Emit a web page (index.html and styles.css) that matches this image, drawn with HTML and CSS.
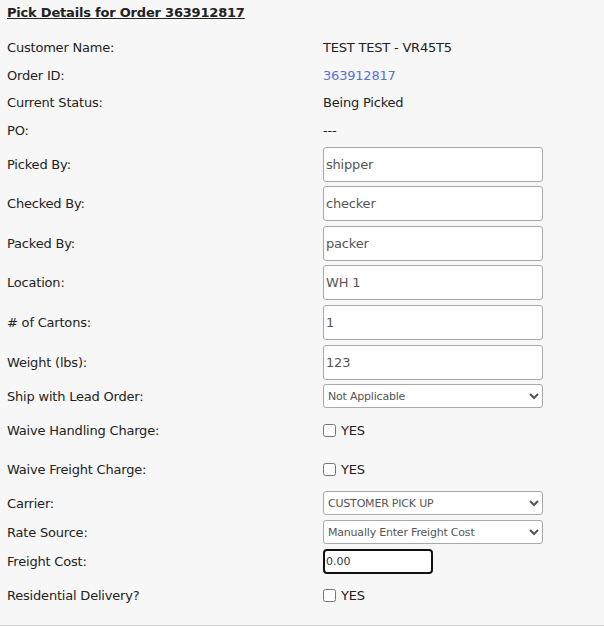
FILE: index.html
```html
<!DOCTYPE html>
<html lang="en">
<head>
    <meta charset="UTF-8" />
    <title>Pick Details</title>
    <link rel="stylesheet" href="styles.css">
</head>
<body>
    <div class="pick-panel">
        <h3 class="titulo">Pick Details for Order 363912817</h3>

        <table class="detalles">
            <tr class="fila-texto">
                <td class="etiqueta">Customer Name:</td>
                <td>TEST TEST - VR45T5</td>
            </tr>
            <tr class="fila-texto">
                <td class="etiqueta">Order ID:</td>
                <td><a class="enlace" href="#">363912817</a></td>
            </tr>
            <tr class="fila-texto">
                <td class="etiqueta">Current Status:</td>
                <td>Being Picked</td>
            </tr>
            <tr class="fila-texto">
                <td class="etiqueta">PO:</td>
                <td>---</td>
            </tr>
            <tr class="fila-input">
                <td class="etiqueta">Picked By:</td>
                <td><input class="campo" type="text" value="shipper"></td>
            </tr>
            <tr class="fila-input">
                <td class="etiqueta">Checked By:</td>
                <td><input class="campo" type="text" value="checker"></td>
            </tr>
            <tr class="fila-input">
                <td class="etiqueta">Packed By:</td>
                <td><input class="campo" type="text" value="packer"></td>
            </tr>
            <tr class="fila-input">
                <td class="etiqueta">Location:</td>
                <td><input class="campo" type="text" value="WH 1"></td>
            </tr>
            <tr class="fila-input">
                <td class="etiqueta"># of Cartons:</td>
                <td><input class="campo" type="text" value="1"></td>
            </tr>
            <tr class="fila-input">
                <td class="etiqueta">Weight (lbs):</td>
                <td><input class="campo" type="text" value="123"></td>
            </tr>
            <tr class="fila-select">
                <td class="etiqueta">Ship with Lead Order:</td>
                <td>
                    <select class="lista">
                        <option>Not Applicable</option>
                    </select>
                </td>
            </tr>
            <tr class="fila-check">
                <td class="etiqueta">Waive Handling Charge:</td>
                <td><label class="opcion"><input type="checkbox"> YES</label></td>
            </tr>
            <tr class="fila-check">
                <td class="etiqueta">Waive Freight Charge:</td>
                <td><label class="opcion"><input type="checkbox"> YES</label></td>
            </tr>
            <tr class="fila-select">
                <td class="etiqueta">Carrier:</td>
                <td>
                    <select class="lista">
                        <option>CUSTOMER PICK UP</option>
                    </select>
                </td>
            </tr>
            <tr class="fila-select">
                <td class="etiqueta">Rate Source:</td>
                <td>
                    <select class="lista">
                        <option>Manually Enter Freight Cost</option>
                    </select>
                </td>
            </tr>
            <tr class="fila-select">
                <td class="etiqueta">Freight Cost:</td>
                <td><input class="campo-costo" type="text" value="0.00"></td>
            </tr>
            <tr class="fila-check">
                <td class="etiqueta">Residential Delivery?</td>
                <td><label class="opcion"><input type="checkbox"> YES</label></td>
            </tr>
        </table>
    </div>
</body>
</html>
```

FILE: styles.css
```css
body {
    font-family: 'DejaVu Sans', Verdana, sans-serif;
    font-size: 13px;
    letter-spacing: -0.2px;
    background-color: #f7f7f7;
    color: #222;
    margin: 0;
    padding: 0;
}
.pick-panel {
    padding: 4px 7px 10px 7px;
    border-bottom: 1px solid #d0d0d0;
    height: 611px;
}
.titulo {
    margin: 0;
    font-size: 13px;
    font-weight: bold;
    text-decoration: underline;
    line-height: 18px;
}
.detalles {
    border-collapse: collapse;
    margin-top: 12px;
}
.detalles td {
    padding: 0;
    vertical-align: middle;
}
.etiqueta {
    width: 316px;
}
.fila-texto {
    height: 27.6px;
}
.fila-input {
    height: 39.6px;
}
.fila-select {
    height: 29px;
}
.fila-check {
    height: 39px;
}
.enlace {
    color: #5b6fd9;
    text-decoration: none;
}
.campo {
    box-sizing: border-box;
    width: 220px;
    height: 35px;
    border: 1px solid #a9a9a9;
    border-radius: 3px;
    padding: 0 2px;
    font-family: 'DejaVu Sans', Verdana, sans-serif;
    font-size: 13px;
    letter-spacing: -0.2px;
    color: #555;
    background-color: #fff;
    display: block;
}
.lista {
    box-sizing: border-box;
    width: 220px;
    height: 24px;
    border: 1px solid #a9a9a9;
    border-radius: 3px;
    font-family: 'DejaVu Sans', Verdana, sans-serif;
    font-size: 11px;
    letter-spacing: -0.2px;
    color: #555;
    background-color: #fff;
    display: block;
}
.campo-costo {
    box-sizing: border-box;
    width: 110px;
    height: 25px;
    border: 2px solid #111;
    border-radius: 4px;
    padding: 0 1px;
    font-family: 'DejaVu Sans', Verdana, sans-serif;
    font-size: 11px;
    color: #333;
    background-color: #fff;
    display: block;
    outline: none;
}
.opcion {
    display: flex;
    align-items: center;
    gap: 5px;
}
.opcion input {
    margin: 0;
    width: 13px;
    height: 13px;
}
```
